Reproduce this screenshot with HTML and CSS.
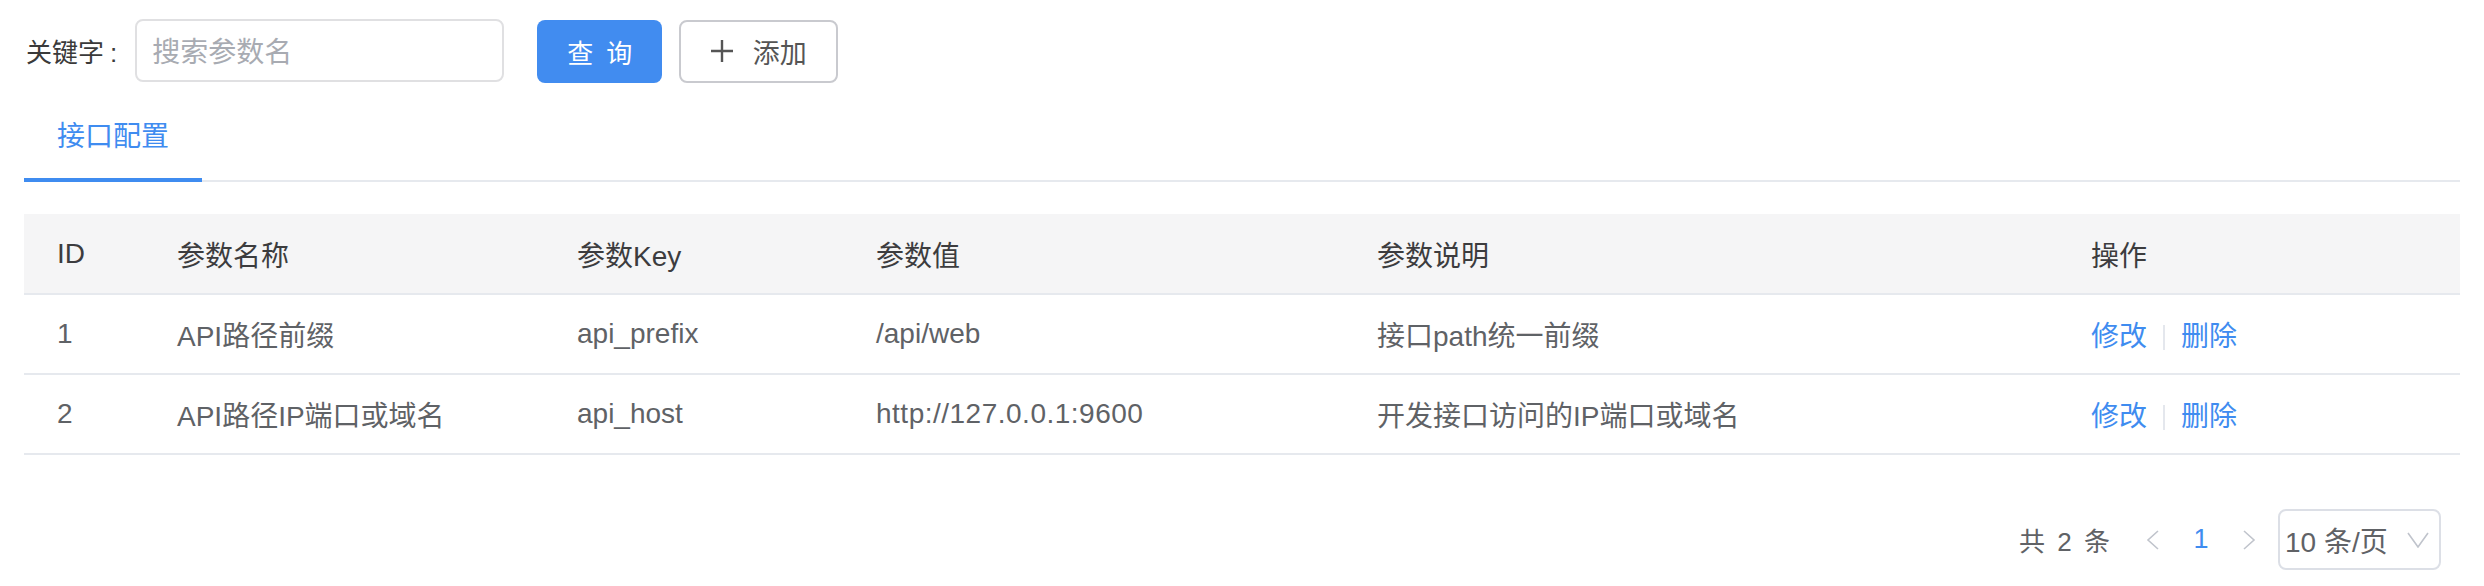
FILE: index.html
```html
<!DOCTYPE html>
<html lang="zh-CN">
<head>
<meta charset="utf-8">
<title>接口配置</title>
<link rel="stylesheet" href="styles.css">
</head>
<body>
<div class="page">
  <div class="search">
    <label class="search-label">关键字<span class="colon">:</span></label>
    <div class="input"><span class="placeholder">搜索参数名</span></div>
    <button class="btn btn-primary">查 询</button>
    <button class="btn btn-default">
      <svg class="plus" width="22" height="22" viewBox="0 0 22 22"><path d="M11 0V22M0 11H22" stroke="#555" stroke-width="2.4" fill="none"/></svg>
      <span>添加</span>
    </button>
  </div>

  <div class="tabs">
    <div class="tab active">接口配置</div>
  </div>

  <table class="grid">
    <colgroup>
      <col style="width:120px">
      <col style="width:400px">
      <col style="width:299px">
      <col style="width:501px">
      <col style="width:714px">
      <col>
    </colgroup>
    <thead>
      <tr><th>ID</th><th>参数名称</th><th>参数Key</th><th>参数值</th><th>参数说明</th><th>操作</th></tr>
    </thead>
    <tbody>
      <tr>
        <td>1</td><td>API路径前缀</td><td>api_prefix</td><td>/api/web</td><td>接口path统一前缀</td>
        <td><span class="link">修改</span><span class="sep"></span><span class="link">删除</span></td>
      </tr>
      <tr>
        <td>2</td><td>API路径IP端口或域名</td><td>api_host</td><td class="latin">http://127.0.0.1:9600</td><td>开发接口访问的IP端口或域名</td>
        <td><span class="link">修改</span><span class="sep"></span><span class="link">删除</span></td>
      </tr>
    </tbody>
  </table>

  <div class="pager">
    <span class="total">共 2 条</span>
    <span class="pbtn">
      <svg width="14" height="20" viewBox="0 0 14 20"><path d="M12 1L2 10L12 19" stroke="#c0c4cc" stroke-width="1.6" fill="none"/></svg>
    </span>
    <span class="pnum">1</span>
    <span class="pbtn">
      <svg width="14" height="20" viewBox="0 0 14 20"><path d="M2 1L12 10L2 19" stroke="#c0c4cc" stroke-width="1.6" fill="none"/></svg>
    </span>
    <div class="select">
      <span>10 条/页</span>
      <svg class="caret" width="22" height="16" viewBox="0 0 22 16"><path d="M1 1L11 15L21 1" stroke="#c0c4cc" stroke-width="1.6" fill="none"/></svg>
    </div>
  </div>
</div>
</body>
</html>
```

FILE: styles.css
```css
* { box-sizing: border-box; }
html, body {
  margin: 0;
  background: #ffffff;
}
body {
  font-family: "Liberation Sans", "Noto Sans CJK SC", sans-serif;
  color: #606266;
}
.page {
  padding: 18px 24px 0 24px;
}
.search {
  display: flex;
  align-items: center;
  height: 64px;
}
.search-label {
  font-size: 26px;
  color: #3a3a3a;
  padding-left: 2px;
  margin-right: 18px;
}
.colon {
  margin-left: 6px;
}
.input {
  width: 369px;
  height: 63px;
  border: 2px solid #e0e0e2;
  border-radius: 8px;
  display: flex;
  align-items: center;
  padding-left: 15px;
}
.placeholder {
  font-size: 28px;
  color: #a8abb2;
}
.btn {
  height: 63px;
  border-radius: 8px;
  font-family: "Liberation Sans", "Noto Sans CJK SC", sans-serif;
  display: flex;
  align-items: center;
  justify-content: center;
  padding: 0;
  cursor: pointer;
}
.btn-primary {
  margin-left: 33px;
  width: 125px;
  background: #418cf0;
  border: none;
  color: #ffffff;
  font-size: 26px;
  word-spacing: 6px;
  margin-top: 2px;
}
.btn-default {
  margin-left: 17px;
  width: 159px;
  background: #ffffff;
  border: 2px solid #c9cacf;
  color: #555555;
  font-size: 27px;
  gap: 20px;
  margin-top: 2px;
}
.plus { display: block; }

.tabs {
  margin-top: 12px;
  display: flex;
  border-bottom: 2px solid #e6e9ee;
}
.tab {
  height: 88px;
  line-height: 78px;
  padding: 4px 33px 2px 33px;
  font-size: 28px;
  margin-bottom: -2px;
}
.tab.active {
  color: #3f8cf0;
  border-bottom: 4px solid #3f8cf0;
}

.grid {
  margin-top: 32px;
  width: 2436px;
  border-collapse: collapse;
  table-layout: fixed;
  font-size: 28px;
}
.grid th {
  background: #f5f5f6;
  color: #3c3c3e;
  font-weight: normal;
  text-align: left;
  height: 80px;
  padding: 0 0 0 33px;
  border-bottom: 2px solid #e6e9ee;
}
.grid td {
  height: 80px;
  padding: 0 0 0 33px;
  border-bottom: 2px solid #e6e9ee;
  color: #5f6266;
  white-space: nowrap;
}
.grid td.latin {
  letter-spacing: 0.5px;
}
.link {
  color: #3f8cf0;
}
.sep {
  display: inline-block;
  width: 2px;
  height: 25px;
  background: #e4e7ed;
  margin: 0 16px;
  vertical-align: -4px;
}

.pager {
  margin-top: 54px;
  display: flex;
  justify-content: flex-end;
  align-items: center;
  padding-right: 19px;
  font-size: 26px;
  color: #606266;
}
.total {
  word-spacing: 5px;
  margin-right: 20px;
}
.pbtn {
  width: 46px;
  height: 61px;
  display: flex;
  align-items: center;
  justify-content: center;
}
.pbtn svg { display: block; }
.pnum {
  width: 46px;
  text-align: center;
  margin: 0 2px;
  color: #3f8cf0;
  font-weight: normal;
  font-size: 27px;
}
.select {
  margin-left: 6px;
  width: 163px;
  height: 61px;
  border: 2px solid #dcdfe6;
  border-radius: 8px;
  display: flex;
  align-items: center;
  justify-content: space-between;
  padding: 0 10px 0 5px;
  font-size: 28px;
  color: #606266;
}
.caret { display: block; }
```
